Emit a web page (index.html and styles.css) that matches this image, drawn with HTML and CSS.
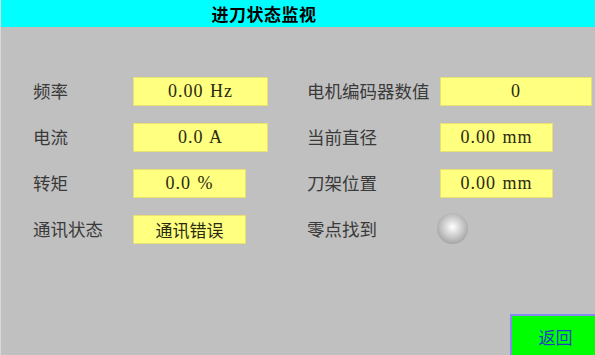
FILE: index.html
```html
<!DOCTYPE html>
<html lang="zh-CN">
<head>
    <meta charset="UTF-8" />
    <meta name="viewport" content="width=device-width, initial-scale=1" />
    <title>进刀状态监视</title>
    <link rel="stylesheet" href="styles.css">
</head>
<body>
    <div class="screen">
        <div class="title-bar">进刀状态监视</div>
        <div class="panel">
            <div class="label">频率</div>
            <div class="cell"><div class="value wide">0.00 Hz</div></div>
            <div class="label">电机编码器数值</div>
            <div class="cell"><div class="value xwide">0</div></div>

            <div class="label">电流</div>
            <div class="cell"><div class="value wide">0.0 A</div></div>
            <div class="label">当前直径</div>
            <div class="cell"><div class="value">0.00 mm</div></div>

            <div class="label">转矩</div>
            <div class="cell"><div class="value">0.0 %</div></div>
            <div class="label">刀架位置</div>
            <div class="cell"><div class="value">0.00 mm</div></div>

            <div class="label">通讯状态</div>
            <div class="cell"><div class="value cn">通讯错误</div></div>
            <div class="label">零点找到</div>
            <div class="cell"><div class="lamp"></div></div>
        </div>
        <div class="footer">
            <button class="back-btn">返回</button>
        </div>
    </div>
</body>
</html>
```

FILE: styles.css
```css
html, body {
    margin: 0;
    height: 100%;
}
body {
    background: #c0c0c0;
    font-family: 'Noto Sans CJK SC', sans-serif;
    overflow: hidden;
}
.screen {
    height: 355px;
    display: flex;
    flex-direction: column;
    border-left: 1px solid #d8d8d8;
}
.title-bar {
    height: 27px;
    line-height: 28px;
    background: #00ffff;
    color: #000;
    font-size: 17px;
    font-weight: bold;
    text-align: center;
    padding-right: 68px;
    letter-spacing: 0.5px;
}
.panel {
    display: grid;
    grid-template-columns: 100px 174px 133px 1fr;
    grid-auto-rows: 30px;
    row-gap: 16px;
    padding: 49px 0 0 32px;
}
.label {
    display: flex;
    align-items: center;
    font-size: 17.5px;
    color: #3a3a3a;
    padding-bottom: 2px;
}
.cell {
    display: flex;
    align-items: center;
}
.value {
    width: 113px;
    height: 29px;
    box-sizing: border-box;
    background: #ffff80;
    border: 1px solid #e8e070;
    color: #2a2a10;
    font-family: 'Liberation Serif', 'Noto Sans CJK SC', serif;
    font-size: 18px;
    letter-spacing: 1px;
    word-spacing: 1px;
    display: flex;
    align-items: center;
    justify-content: center;
    padding-top: 1px;
}
.value.wide { width: 135px; }
.value.xwide { width: 152px; }
.value.cn {
    font-family: 'Noto Sans CJK SC', sans-serif;
    font-size: 17px;
    letter-spacing: 0;
    padding-top: 0;
}
.lamp {
    width: 31px;
    height: 31px;
    margin-left: -3px;
    margin-top: -2px;
    border-radius: 50%;
    background: radial-gradient(circle at 50% 45%, #ffffff 0%, #d4d4d4 35%, #a4a4a4 75%, #888888 100%);
}
.footer {
    margin-top: auto;
    display: flex;
    justify-content: flex-end;
}
.back-btn {
    width: 85px;
    height: 42px;
    margin-bottom: -1px;
    background: #00ff00;
    border: none;
    border-top: 2px solid #8888ee;
    border-left: 2px solid #8888ee;
    color: #2040c8;
    font-family: 'Noto Sans CJK SC', sans-serif;
    font-size: 17px;
    padding: 0 0 0 4px;
    cursor: pointer;
}
```
